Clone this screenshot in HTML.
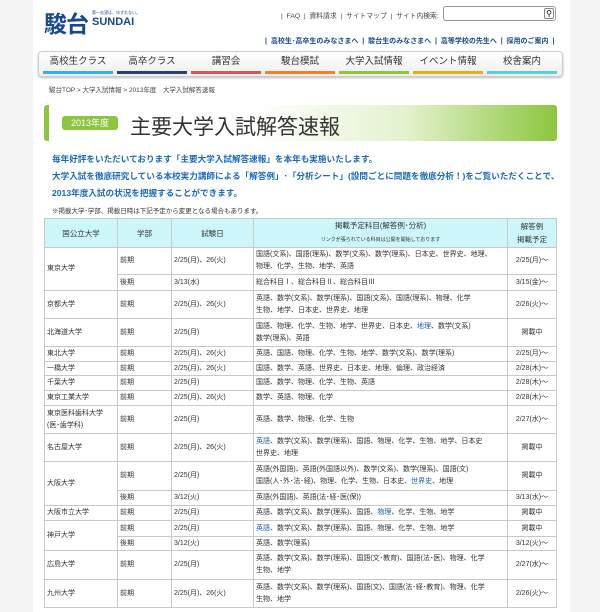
<!DOCTYPE html>
<html><head><meta charset="utf-8"><style>
*{margin:0;padding:0;box-sizing:border-box}
body{width:600px;height:612px;overflow:hidden;background:#f3f3f3;font-family:"Liberation Sans","Noto Sans CJK JP",sans-serif;position:relative}
#w{position:absolute;left:33px;top:0;width:537px;height:612px;background:#fff}
.a{position:absolute;white-space:nowrap}
.nav{position:absolute;left:38px;top:51px;width:525px;height:26px;border:1px solid #ccc;border-radius:4px;background:linear-gradient(#fff,#eee);box-shadow:0 1px 2px #bbb}
.nav div{position:absolute;top:0;width:72px;height:24px;font-size:9.5px;color:#333;text-align:center;line-height:20px}
.nav div i{position:absolute;left:1px;right:1px;bottom:2px;height:3px}
table{position:absolute;left:44px;top:218px;width:512px;border-collapse:collapse;table-layout:fixed;font-size:7px;color:#333}
td{border:1px solid #c8c8c8;padding:0 2px;line-height:12px;vertical-align:middle;white-space:nowrap;overflow:hidden}
th{border:1px solid #c8c8c8;background:#cdf6fa;font-weight:normal;font-size:7.5px;line-height:13px}
.c{text-align:center}
.b{color:#1a5fb4}
</style></head><body>
<div id="w"></div>
<div class="a" style="left:44px;top:5px;font-size:23px;font-weight:bold;color:#1a4a8e;letter-spacing:-1px">駿台</div>
<div class="a" style="left:92px;top:10px;font-size:4px;color:#1a4a8e">第一志望は、ゆずれない。</div>
<div class="a" style="left:92px;top:16px;font-size:11px;font-weight:bold;color:#1a4a8e">SUNDAI</div>
<div class="a" style="left:281px;top:10px;font-size:6.8px;color:#444">|&nbsp; FAQ &nbsp;|&nbsp; 資料請求 &nbsp;|&nbsp; サイトマップ &nbsp;|&nbsp; サイト内検索:</div>
<div class="a" style="left:443px;top:6px;width:113px;height:15px;border:1px solid #999;border-radius:3px;background:#fff"></div>
<div class="a" style="left:544px;top:8px;width:10px;height:11px;border:1px solid #888;border-radius:2px;font-size:8px;line-height:9px;text-align:center">&#9906;</div>
<div class="a" style="left:265px;top:36px;font-size:7px;font-weight:bold;color:#1a4a8e">|&nbsp; 高校生･高卒生のみなさまへ &nbsp;|&nbsp; 駿台生のみなさまへ &nbsp;|&nbsp; 高等学校の先生へ &nbsp;|&nbsp; 採用のご案内 &nbsp;|</div>
<div class="nav">
<div style="left:3px">高校生クラス<i style="background:#3aaee8"></i></div>
<div style="left:77px">高卒クラス<i style="background:#2b3f7a"></i></div>
<div style="left:151px">講習会<i style="background:#cf5a5a"></i></div>
<div style="left:225px">駿台模試<i style="background:#f47f2a"></i></div>
<div style="left:299px">大学入試情報<i style="background:#8cc63f"></i></div>
<div style="left:373px">イベント情報<i style="background:#d9b320"></i></div>
<div style="left:447px">校舎案内<i style="background:#5dcdd8"></i></div>
</div>
<div class="a" style="left:49px;top:84px;font-size:6.5px;color:#444">駿台TOP &gt; 大学入試情報 &gt; 2013年度　大学入試解答速報</div>
<div class="a" style="left:44px;top:105px;width:513px;height:36px;border-left:5px solid #8cc63f;border-radius:3px;background:linear-gradient(90deg,#fff 0%,#fff 40%,#e4f2cf 70%,#8cc63f 100%)"></div>
<div class="a" style="left:62px;top:116px;width:56px;height:14px;background:#8cc63f;border-radius:3px;color:#fff;font-size:9px;line-height:14px;text-align:center">2013年度</div>
<div class="a" style="left:130px;top:111px;font-size:21px;color:#333">主要大学入試解答速報</div>
<div class="a" style="left:52px;top:151px;font-size:8.6px;font-weight:bold;color:#1a6ac0;line-height:17px">毎年好評をいただいております「主要大学入試解答速報」を本年も実施いたします。<br>大学入試を徹底研究している本校実力講師による「解答例」･「分析シート」(設問ごとに問題を徹底分析！)をご覧いただくことで、<br>2013年度入試の状況を把握することができます。</div>
<div class="a" style="left:52px;top:205px;font-size:6.5px;color:#333">※掲載大学･学部、掲載日時は下記予定から変更となる場合もあります。</div>
<table>
<colgroup><col style="width:73px"><col style="width:54px"><col style="width:82px"><col style="width:254px"><col style="width:49px"></colgroup>
<tr style="height:29px"><th>国公立大学</th><th>学部</th><th>試験日</th><th>掲載予定科目(解答例･分析)<br><span style="font-size:5px">リンクが張られている科目は公開を開始しております</span></th><th>解答例<br>掲載予定</th></tr>
<tr style="height:27px"><td rowspan="2">東京大学</td><td>前期</td><td>2/25(月)、26(火)</td><td>国語(文系)、国語(理系)、数学(文系)、数学(理系)、日本史、世界史、地理、<br>物理、化学、生物、地学、英語</td><td class="c">2/25(月)～</td></tr>
<tr style="height:16px"><td>後期</td><td>3/13(水)</td><td>総合科目Ⅰ、総合科目Ⅱ、総合科目Ⅲ</td><td class="c">3/15(金)～</td></tr>
<tr style="height:28px"><td>京都大学</td><td>前期</td><td>2/25(月)、26(火)</td><td>英語、数学(文系)、数学(理系)、国語(文系)、国語(理系)、物理、化学<br>生物、地学、日本史、世界史、地理</td><td class="c">2/26(火)～</td></tr>
<tr style="height:28px"><td>北海道大学</td><td>前期</td><td>2/25(月)</td><td>国語、物理、化学、生物、地学、世界史、日本史、<span class="b">地理</span>、数学(文系)<br>数学(理系)、英語</td><td class="c">掲載中</td></tr>
<tr style="height:15px"><td>東北大学</td><td>前期</td><td>2/25(月)、26(火)</td><td>英語、国語、物理、化学、生物、地学、数学(文系)、数学(理系)</td><td class="c">2/25(月)～</td></tr>
<tr style="height:14px"><td>一橋大学</td><td>前期</td><td>2/25(月)、26(火)</td><td>国語、数学、英語、世界史、日本史、地理、倫理、政治経済</td><td class="c">2/28(木)～</td></tr>
<tr style="height:15px"><td>千葉大学</td><td>前期</td><td>2/25(月)</td><td>国語、数学、物理、化学、生物、英語</td><td class="c">2/28(木)～</td></tr>
<tr style="height:15px"><td>東京工業大学</td><td>前期</td><td>2/25(月)、26(火)</td><td>数学、英語、物理、化学</td><td class="c">2/28(木)～</td></tr>
<tr style="height:28px"><td>東京医科歯科大学<br>(医･歯学科)</td><td>前期</td><td>2/25(月)</td><td>英語、数学、物理、化学、生物</td><td class="c">2/27(水)～</td></tr>
<tr style="height:28px"><td>名古屋大学</td><td>前期</td><td>2/25(月)、26(火)</td><td><span class="b">英語</span>、数学(文系)、数学(理系)、国語、物理、化学、生物、地学、日本史<br>世界史、地理</td><td class="c">掲載中</td></tr>
<tr style="height:29px"><td rowspan="2">大阪大学</td><td>前期</td><td>2/25(月)</td><td>英語(外国語)、英語(外国語以外)、数学(文系)、数学(理系)、国語(文)<br>国語(人･外･法･経)、物理、化学、生物、日本史、<span class="b">世界史</span>、地理</td><td class="c">掲載中</td></tr>
<tr style="height:15px"><td>後期</td><td>3/12(火)</td><td>英語(外国語)、英語(法･経･医(保))</td><td class="c">3/13(水)～</td></tr>
<tr style="height:15px"><td>大阪市立大学</td><td>前期</td><td>2/25(月)</td><td>英語、数学(文系)、数学(理系)、国語、<span class="b">物理</span>、化学、生物、地学</td><td class="c">掲載中</td></tr>
<tr style="height:16px"><td rowspan="2">神戸大学</td><td>前期</td><td>2/25(月)</td><td><span class="b">英語</span>、数学(文系)、数学(理系)、国語、物理、化学、生物、地学</td><td class="c">掲載中</td></tr>
<tr style="height:14px"><td>後期</td><td>3/12(火)</td><td>英語、数学(理系)</td><td class="c">3/12(火)～</td></tr>
<tr style="height:29px"><td>広島大学</td><td>前期</td><td>2/25(月)</td><td>英語、数学(文系)、数学(理系)、国語(文･教育)、国語(法･医)、物理、化学<br>生物、地学</td><td class="c">2/27(水)～</td></tr>
<tr style="height:28px"><td>九州大学</td><td>前期</td><td>2/25(月)、26(火)</td><td>英語、数学(文系)、数学(理系)、国語(文)、国語(法･経･教育)、物理、化学<br>生物、地学</td><td class="c">2/26(火)～</td></tr>
</table>
</body></html>
